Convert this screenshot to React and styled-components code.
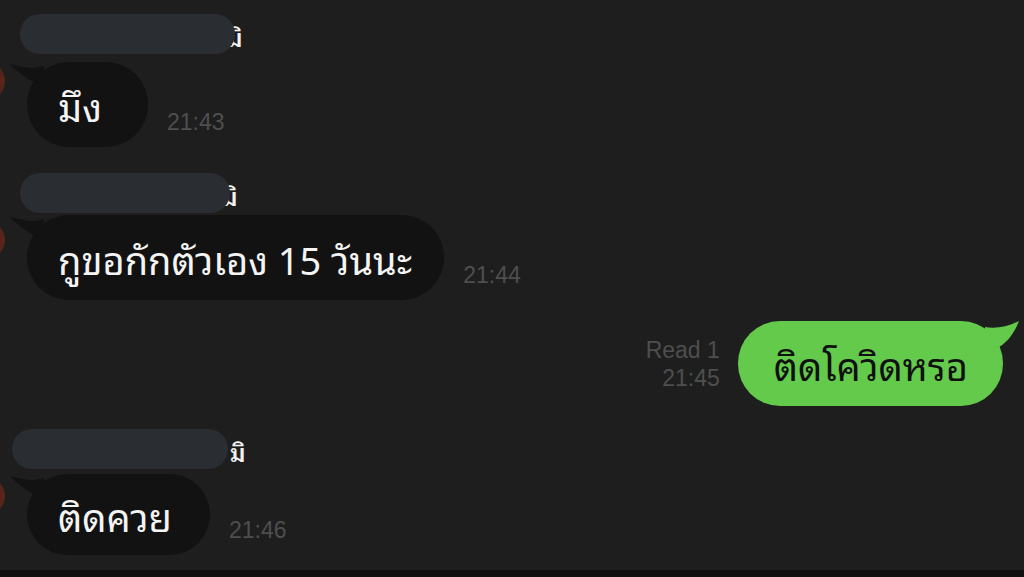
import React from 'react';
import styled, { createGlobalStyle } from 'styled-components';

const THAI = `"Noto Sans Thai Looped", "Noto Sans Thai", "Noto Sans", "Liberation Sans", sans-serif`;

const GlobalStyle = createGlobalStyle`
  html, body {
    margin: 0;
    padding: 0;
    background: #1e1e1e;
  }
  body {
    font-family: ${THAI};
  }
`;

const Screen = styled.div`
  width: 1024px;
  height: 577px;
  display: flex;
  flex-direction: column;
  overflow: hidden;
  background: #1e1e1e;
`;

const Chat = styled.div`
  flex: 1;
  display: flex;
  flex-direction: column;
`;

const BottomBar = styled.div`
  height: 7px;
  background: #0f0f0f;
`;

// incoming message with avatar, blurred name and bubble
const Incoming = styled.div`
  display: flex;
  align-items: flex-start;
  margin-top: ${(p) => p.$top}px;
`;

const Avatar = styled.div`
  width: 40px;
  height: 40px;
  border-radius: 50%;
  margin-left: -35px;
  margin-top: 48px;
  flex-shrink: 0;
  background: radial-gradient(circle at 85% 50%, #5e2619 0%, #3e2019 55%, #221d1c 100%);
`;

const Column = styled.div`
  display: flex;
  flex-direction: column;
  margin-left: ${(p) => p.$left}px;
`;

const NameRow = styled.div`
  display: flex;
  align-items: center;
  height: 41px;
`;

const NamePill = styled.div`
  position: relative;
  z-index: 1;
  width: ${(p) => p.$width}px;
  height: 40px;
  border-radius: 20px;
  background: #2a2d31;
`;

const NameTail = styled.span`
  margin-left: ${(p) => p.$overlap}px;
  color: #f2f2f2;
  font-size: 24px;
  font-weight: 600;
  line-height: 1;
  padding-top: 4px;
`;

const MessageRow = styled.div`
  display: flex;
  align-items: flex-end;
  margin-top: ${(p) => p.$gap}px;
  margin-left: ${(p) => p.$indent}px;
`;

const Bubble = styled.div`
  position: relative;
  box-sizing: border-box;
  height: ${(p) => p.$height || 85}px;
  min-width: ${(p) => p.$minWidth || 0}px;
  padding: ${(p) => (p.$sent ? '0 35px 0 36px' : '0 32px 0 31px')};
  border-radius: 42px;
  display: flex;
  align-items: center;
  background: ${(p) => (p.$sent ? '#63ca4b' : '#121212')};
  color: ${(p) => (p.$sent ? '#101010' : '#f4f4f4')};
  font-family: ${THAI};
  font-size: 38px;
  white-space: nowrap;
`;

const Tail = styled.svg`
  position: absolute;
  top: 0;
  ${(p) => (p.$side === 'right' ? 'right: -16px;' : 'left: -17px;')}
  width: 34px;
  height: 34px;
`;

const Time = styled.span`
  font-family: "Liberation Sans", Arial, sans-serif;
  font-size: 23px;
  line-height: 26px;
  color: #4e4e4e;
  margin-left: 19px;
  margin-bottom: 12px;
`;

const Outgoing = styled.div`
  display: flex;
  justify-content: flex-end;
  align-items: flex-end;
  margin-top: ${(p) => p.$top}px;
  padding-right: 21px;
`;

const Status = styled.div`
  display: flex;
  flex-direction: column;
  align-items: flex-end;
  font-family: "Liberation Sans", Arial, sans-serif;
  font-size: 23px;
  line-height: 28px;
  color: #4e4e4e;
  margin-right: 18px;
  margin-bottom: 14px;
`;

const IncomingTail = () => (
  <Tail $side="left" viewBox="0 0 34 34">
    <path d="M0 2 C8 4 16 6 24 6 L34 4 L34 22 C24 22 14 16 0 2 Z" fill="#121212" />
  </Tail>
);

const OutgoingTail = () => (
  <Tail $side="right" viewBox="0 0 34 34">
    <path d="M0 6 C10 8 22 6 34 0 C30 10 24 20 14 26 L0 30 Z" fill="#63ca4b" />
  </Tail>
);

const IncomingMessage = ({ top, pillWidth, pillLeft, tailOverlap, gap, text, time, height, minWidth }) => (
  <Incoming $top={top}>
    <Avatar />
    <Column $left={pillLeft}>
      <NameRow>
        <NamePill $width={pillWidth} />
        <NameTail $overlap={tailOverlap}>มิ</NameTail>
      </NameRow>
      <MessageRow $gap={gap} $indent={27 - (pillLeft + 5)}>
        <Bubble $height={height} $minWidth={minWidth}>
          <IncomingTail />
          {text}
        </Bubble>
        <Time>{time}</Time>
      </MessageRow>
    </Column>
  </Incoming>
);

export default function App() {
  return (
    <Screen>
      <GlobalStyle />
      <Chat>
        <IncomingMessage
          top={13}
          pillWidth={215}
          pillLeft={15}
          tailOverlap={-8}
          gap={8}
          text="มึง"
          time="21:43"
          minWidth={121}
        />
        <IncomingMessage
          top={25}
          pillWidth={210}
          pillLeft={15}
          tailOverlap={-8}
          gap={2}
          text="กูขอกักตัวเอง 15 วันนะ"
          time="21:44"
        />
        <Outgoing $top={21}>
          <Status>
            <span>Read 1</span>
            <span>21:45</span>
          </Status>
          <Bubble $sent>
            <OutgoingTail />
            ติดโควิดหรอ
          </Bubble>
        </Outgoing>
        <IncomingMessage
          top={22}
          pillWidth={216}
          pillLeft={7}
          tailOverlap={2}
          gap={5}
          text="ติดควย"
          time="21:46"
          height={81}
          minWidth={183}
        />
      </Chat>
      <BottomBar />
    </Screen>
  );
}
